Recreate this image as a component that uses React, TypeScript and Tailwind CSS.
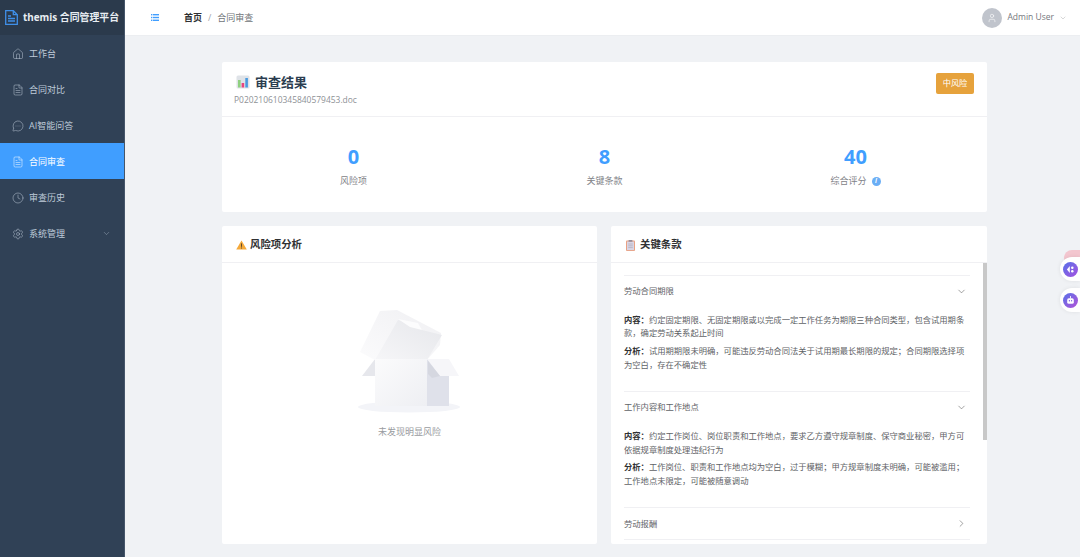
import { House, FileText, MessageCircleMore, Clock, Settings, ChevronDown, ChevronRight, User } from "lucide-react";

const font = { fontFamily: '"Open Sans", "Noto Sans CJK SC", sans-serif' };

const menu = [
  { label: "工作台", Icon: House },
  { label: "合同对比", Icon: FileText },
  { label: "AI智能问答", Icon: MessageCircleMore },
  { label: "合同审查", Icon: FileText, active: true },
  { label: "审查历史", Icon: Clock },
  { label: "系统管理", Icon: Settings, arrow: true },
];

function Logo() {
  return (
    <svg width="13" height="15" viewBox="0 0 13 15" fill="none" stroke="#3f8fe8" strokeWidth="1.3">
      <path d="M0.7 0.7h7.6l4 4v9.6H0.7z" />
      <path d="M8.3 0.7v4h4M3 6h3M3 8.5h7M3 11h7" />
    </svg>
  );
}

function MenuIcon() {
  return (
    <svg width="8" height="7" viewBox="0 0 8 7" fill="#409eff">
      <rect x="0" y="0" width="1.4" height="1.4" />
      <rect x="2" y="0" width="6" height="1.4" />
      <rect x="0" y="2.8" width="1.4" height="1.4" />
      <rect x="2" y="2.8" width="6" height="1.4" />
      <rect x="0" y="5.6" width="1.4" height="1.4" />
      <rect x="2" y="5.6" width="6" height="1.4" />
    </svg>
  );
}

function ChartIcon() {
  return (
    <svg width="14" height="14" viewBox="0 0 14 14">
      <rect x="0.5" y="0.5" width="13" height="13" rx="1.5" fill="#dfe3e8" />
      <rect x="2" y="5" width="2.6" height="7.5" fill="#8fd07f" />
      <rect x="5.6" y="8" width="2.6" height="4.5" fill="#e8457f" />
      <rect x="9.3" y="3" width="2.6" height="9.5" fill="#4a9be0" />
    </svg>
  );
}

function WarnIcon() {
  return (
    <svg width="11" height="10" viewBox="0 0 11 10">
      <path d="M5.5 0.5 L10.8 9.6 H0.2 Z" fill="#f5a93a" />
      <rect x="5" y="3.4" width="1" height="3.4" fill="#5a4a30" />
      <rect x="5" y="7.5" width="1" height="1" fill="#5a4a30" />
    </svg>
  );
}

function ClipIcon() {
  return (
    <svg width="9" height="11" viewBox="0 0 9 11">
      <rect x="0" y="0.5" width="9" height="10.5" rx="1" fill="#e9a183" />
      <rect x="1" y="1.5" width="7" height="8.6" fill="#d9d5e4" />
      <rect x="2.6" y="0" width="3.8" height="1.8" fill="#9a8f9c" />
      <path d="M2.2 4h4.6M2.2 5.8h4.6M2.2 7.6h4.6" stroke="#a8a3b6" strokeWidth="0.6" />
    </svg>
  );
}

function EmptyBox() {
  return (
    <svg width="150" height="125" viewBox="0 0 150 125">
      <defs>
        <linearGradient id="lidOuter" x1="0" y1="1" x2="1" y2="0">
          <stop offset="0" stopColor="#fbfbfc" />
          <stop offset="1" stopColor="#f0f0f3" />
        </linearGradient>
        <linearGradient id="lidInner" x1="0" y1="1" x2="1" y2="0">
          <stop offset="0" stopColor="#f6f6f8" />
          <stop offset="1" stopColor="#e6e7eb" />
        </linearGradient>
        <linearGradient id="front" x1="0" y1="0" x2="1" y2="1">
          <stop offset="0" stopColor="#fbfbfc" />
          <stop offset="1" stopColor="#eeeff3" />
        </linearGradient>
      </defs>
      <ellipse cx="79" cy="117" rx="51" ry="5.5" fill="#f3f4f8" />
      <path d="M45 69 L32 86 H45 Z" fill="#e6e7ec" />
      <path d="M97 69 H119 V116 H97 Z" fill="#dfe1ea" />
      <path d="M30 62 L50 21 L67 20 L111 43 L110 55 L97 70 H45 Z" fill="url(#lidOuter)" />
      <path d="M68 30 L88 34 L92 40 L112 45 L97 70 H45 Z" fill="url(#lidInner)" />
      <path d="M68 29 L88 33 L92 40 L80 37 Z" fill="#fcfcfd" />
      <path d="M45 69 H97 V116 H45 Z" fill="url(#front)" />
      <path d="M97 69 L119 69 L129 86 H110 Z" fill="#f6f6f9" />
      <path d="M98 71 L110 86 L102 88 L98 84 Z" fill="#d5d7e0" />
    </svg>
  );
}

function Clause({ title, open, content, analysis }: { title: string; open?: boolean; content?: string; analysis?: string }) {
  return (
    <div className="border-t border-[#f0f0f3]">
      <div className="flex h-[31px] items-center justify-between pr-[3px] text-[8.3px] text-[#5f6368]">
        <span>{title}</span>
        {open ? <ChevronDown size={11} strokeWidth={1.2} color="#555" /> : <ChevronRight size={11} strokeWidth={1.2} color="#555" />}
      </div>
      {open && (
        <div className="pt-[6px] pb-[20px] text-[8.3px] leading-[13.4px] text-[#606266]">
          <p className="mb-[4.5px]"><b className="font-bold text-[#303133]">内容：</b>{content}</p>
          <p><b className="font-bold text-[#303133]">分析：</b>{analysis}</p>
        </div>
      )}
    </div>
  );
}

function Stat({ value, label, info }: { value: string; label: string; info?: boolean }) {
  return (
    <div className="flex flex-1 flex-col items-center">
      <div className="text-[20px] font-bold leading-[26px] text-[#409eff]">{value}</div>
      <div className="mt-[4px] flex items-center gap-[5px] text-[9px] leading-[14px] text-[#7f8287]">
        {label}
        {info && (
          <span className="flex h-[9px] w-[9px] items-center justify-center rounded-full bg-[#6aaef5] text-[6.5px] italic font-bold text-white">i</span>
        )}
      </div>
    </div>
  );
}

export default function App() {
  return (
    <div className="relative flex h-[557px] w-[1080px] overflow-hidden bg-[#f0f2f5]" style={font}>
      <aside className="flex w-[125px] shrink-0 flex-col border-r border-[#46566a] bg-[#304156]">
        <div className="flex h-[35px] items-center gap-[5px] bg-[#2b3a4c] pl-[5px]">
          <Logo />
          <span className="whitespace-nowrap text-[9.9px] font-bold text-[#e8edf2]">themis 合同管理平台</span>
        </div>
        {menu.map(({ label, Icon, active, arrow }) => (
          <div
            key={label}
            className={`flex h-[36px] items-center gap-[5px] pl-[12px] pr-[13px] pt-[1px] text-[9px] ${active ? "bg-[#409eff] text-white" : "text-[#bfcbd9]"}`}
          >
            <Icon size={12} strokeWidth={1} />
            <span className="flex-1">{label}</span>
            {arrow && <ChevronDown size={9} strokeWidth={1} />}
          </div>
        ))}
      </aside>

      <div className="flex min-w-0 flex-1 flex-col">
        <header className="flex h-[36px] shrink-0 items-center border-b border-[#eceef1] bg-white pl-[26px] pr-[13px]">
          <MenuIcon />
          <div className="ml-[25px] flex items-center text-[9px]">
            <span className="font-bold text-[#303133]">首页</span>
            <span className="mx-[6px] text-[#a0a3a8]">/</span>
            <span className="text-[#707478]">合同审查</span>
          </div>
          <div className="ml-auto flex items-center">
            <div className="flex h-[20px] w-[20px] items-center justify-center rounded-full bg-[#c0c4cc]">
              <User size={10} color="#fff" strokeWidth={1.4} />
            </div>
            <span className="ml-[5px] text-[8.5px] text-[#75787d]">Admin User</span>
            <ChevronDown size={8} strokeWidth={1} color="#888" className="ml-[5px]" />
          </div>
        </header>

        <main className="ml-[97px] flex w-[765px] flex-col gap-[14px] pt-[26px]">
          <section className="h-[150px] rounded-[2px] bg-white">
            <div className="flex h-[55px] items-start justify-between border-b border-[#f0f0f3] pl-[12px] pr-[13px] pt-[9px]">
              <div>
                <div className="flex h-[22px] items-center gap-[5px] pb-[1px] pl-[2px] text-[13px] font-bold leading-[20px] text-[#2c3e50]">
                  <ChartIcon />
                  审查结果
                </div>
                <div className="text-[8.45px] leading-[13px] text-[#8e9196]">P020210610345840579453.doc</div>
              </div>
              <div className="mt-[2px] flex h-[21px] w-[38px] items-center justify-center rounded-[2px] bg-[#e6a23c] text-[8.2px] text-white">中风险</div>
            </div>
            <div className="mx-[6px] flex pt-[27px]">
              <Stat value="0" label="风险项" />
              <Stat value="8" label="关键条款" />
              <Stat value="40" label="综合评分" info />
            </div>
          </section>

          <div className="flex gap-[14px]">
            <section className="h-[318px] w-[375px] rounded-[2px] bg-white">
              <div className="flex h-[37px] items-center gap-[3px] border-b border-[#f0f0f3] pl-[14px] pt-[2px] text-[10.4px] font-bold text-[#303133]">
                <WarnIcon />
                风险项分析
              </div>
              <div className="flex flex-col items-center pt-[27px]">
                <div className="ml-[-9px]"><EmptyBox /></div>
                <div className="mt-[10px] text-[9px] text-[#989ba0]">未发现明显风险</div>
              </div>
            </section>

            <section className="relative h-[318px] w-[376px] overflow-hidden rounded-[2px] bg-white">
              <div className="flex h-[37px] items-center gap-[5px] border-b border-[#f0f0f3] pl-[15px] pt-[2px] text-[10.4px] font-bold text-[#303133]">
                <ClipIcon />
                关键条款
              </div>
              <div className="pl-[13px] pr-[17px] pt-[12px]">
                <Clause
                  title="劳动合同期限"
                  open
                  content="约定固定期限、无固定期限或以完成一定工作任务为期限三种合同类型，包含试用期条款，确定劳动关系起止时间"
                  analysis="试用期期限未明确，可能违反劳动合同法关于试用期最长期限的规定；合同期限选择项为空白，存在不确定性"
                />
                <Clause
                  title="工作内容和工作地点"
                  open
                  content="约定工作岗位、岗位职责和工作地点，要求乙方遵守规章制度、保守商业秘密，甲方可依据规章制度处理违纪行为"
                  analysis="工作岗位、职责和工作地点均为空白，过于模糊；甲方规章制度未明确，可能被滥用；工作地点未限定，可能被随意调动"
                />
                <Clause title="劳动报酬" />
                <div className="border-t border-[#f0f0f3]" />
              </div>
              <div className="absolute right-0 top-[37px] h-[177px] w-[4px] bg-[#c8c8c8]" />
            </section>
          </div>
        </main>
      </div>

      <div className="absolute right-0 top-[250px] h-[16px] w-[16px] rounded-l-full bg-[#f3c6cf]" />
      <div className="absolute right-0 top-[257px] flex h-[24px] w-[20px] items-center rounded-l-full bg-white pl-[3px] shadow-[0_0_4px_rgba(0,0,0,0.08)]">
        <div className="flex h-[15px] w-[15px] items-center justify-center rounded-full bg-gradient-to-br from-[#4f6fe8] to-[#a24fe0]">
          <svg width="9" height="9" viewBox="0 0 8 8" fill="#fff">
            <path d="M3.4 0.8 L0.8 4 L3.4 7.2 Z" />
            <circle cx="5.6" cy="2.4" r="1.1" />
            <circle cx="5.6" cy="5.6" r="1.1" />
          </svg>
        </div>
      </div>
      <div className="absolute right-0 top-[288px] flex h-[24px] w-[20px] items-center rounded-l-full bg-white pl-[3px] shadow-[0_0_4px_rgba(0,0,0,0.08)]">
        <div className="flex h-[15px] w-[15px] items-center justify-center rounded-full bg-gradient-to-br from-[#4f6fe8] to-[#b04fd8]">
          <svg width="11" height="11" viewBox="0 0 10 10">
            <rect x="2" y="3" width="6" height="5" rx="1.5" fill="#fff" />
            <rect x="4.6" y="1" width="0.8" height="2" fill="#fff" />
            <circle cx="4" cy="5.2" r="0.6" fill="#7a5fe0" />
            <circle cx="6" cy="5.2" r="0.6" fill="#7a5fe0" />
          </svg>
        </div>
      </div>
    </div>
  );
}
